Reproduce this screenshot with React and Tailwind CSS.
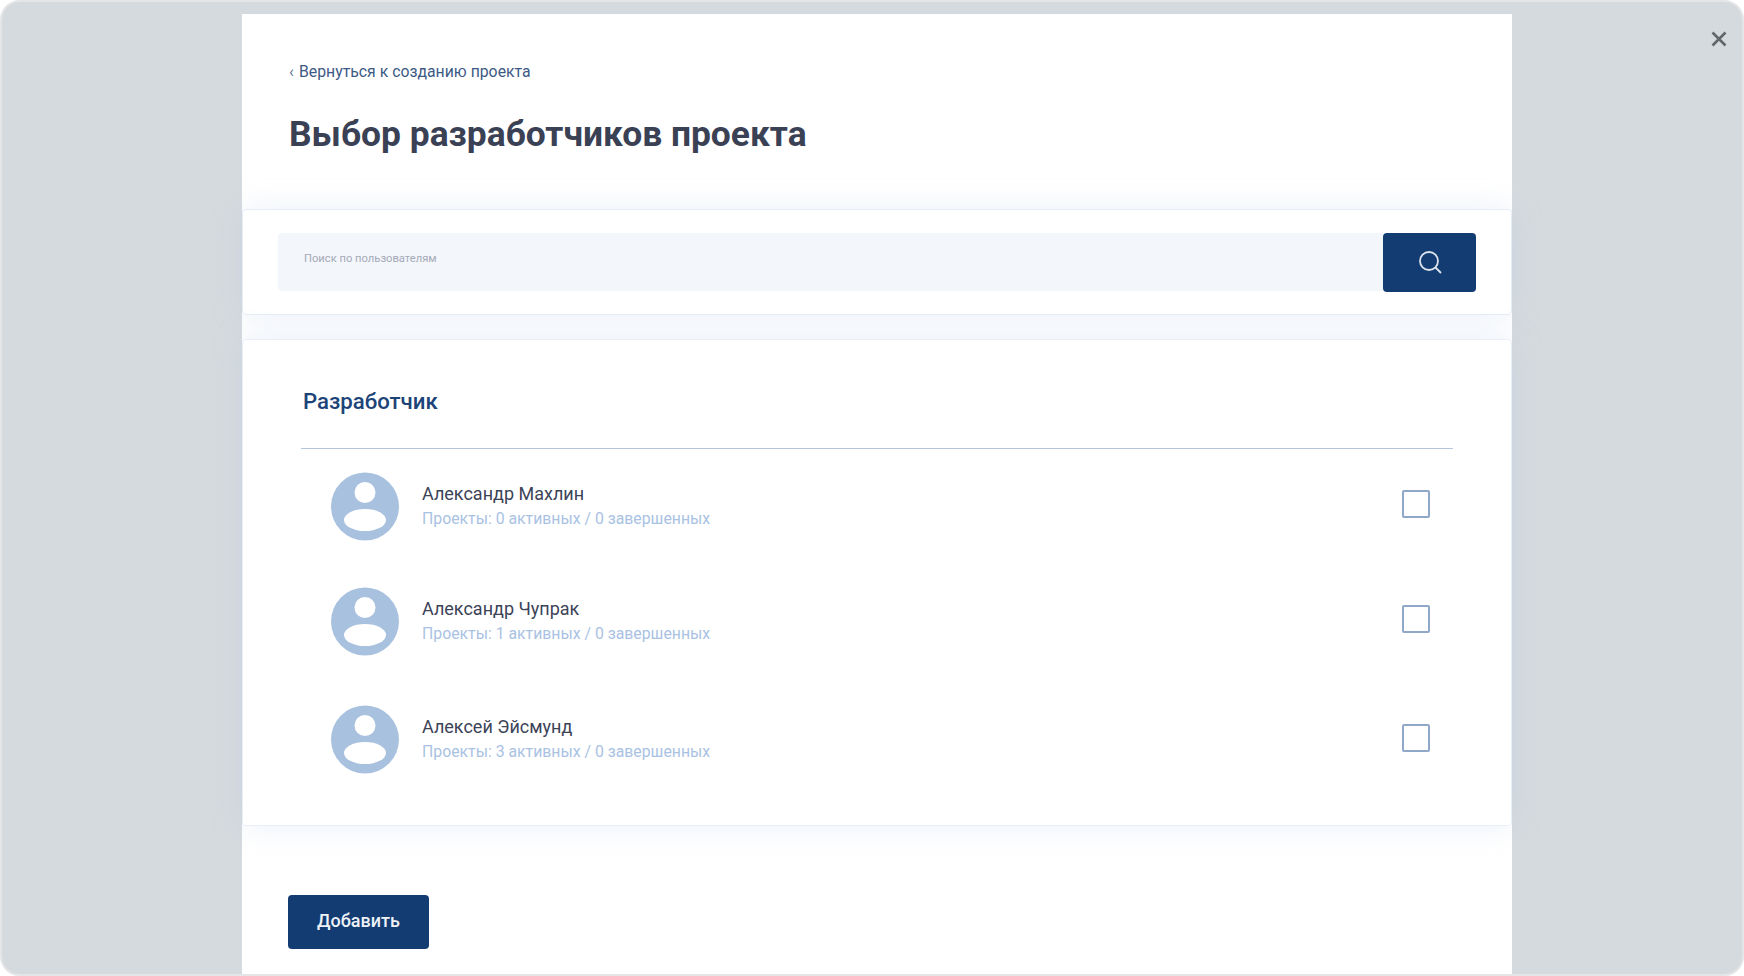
const font = { fontFamily: '"Roboto", "Liberation Sans", sans-serif' };

function Avatar() {
  return (
    <svg width="68" height="69" viewBox="0 0 68 69" className="shrink-0">
      <circle cx="34" cy="34.5" r="34" fill="#a8c1de" />
      <circle cx="34" cy="20.5" r="10.5" fill="#fff" />
      <ellipse cx="34" cy="48" rx="21" ry="11" fill="#fff" />
    </svg>
  );
}

function Row({ name, active, className, checkClass }) {
  return (
    <div className={`flex items-start ${className}`}>
      <Avatar />
      <div className="ml-[23px] flex flex-col">
        <div className="mt-[10px] h-6 text-[18px] leading-6 text-[#3c4357]">{name}</div>
        <div className="mt-[1px] h-6 text-[15.8px] leading-6 text-[#a9c2e3]">
          Проекты: {active} активных / 0 завершенных
        </div>
      </div>
      <div className={`ml-auto mr-[23px] h-[28px] w-[28px] rounded-[2px] border-2 border-[#8fa8c8] bg-white ${checkClass}`} />
    </div>
  );
}

export default function App() {
  return (
    <div className="h-[976px] w-full overflow-hidden bg-white" style={font}>
      <div className="relative h-full w-full overflow-hidden rounded-[20px] border-2 border-[#e3e5e7] bg-[#d5dade]">
        <svg width="16" height="16" viewBox="0 0 16 16" className="absolute left-[1709px] top-[29px]">
          <path d="M1.5 1.5 L14.5 14.5 M14.5 1.5 L1.5 14.5" stroke="#62666a" strokeWidth="2.6" fill="none" />
        </svg>

        <div className="ml-[240px] mt-[12px] h-[964px] w-[1270px] bg-white">
          <div className="pl-[47px] pt-[48px]">
            <div className="flex h-5 items-center text-[15.8px] leading-5 text-[#3d5a85]">
              <span className="mr-[5px] w-[5px] text-[16px] text-[#5f7391]">‹</span>
              <span>Вернуться к созданию проекта</span>
            </div>
            <h1 className="mt-[29px] text-[35.4px] font-bold leading-[46px] text-[#3a4155]">
              Выбор разработчиков проекта
            </h1>
          </div>

          <div className="mt-[52px] flex h-[106px] items-center rounded-[4px] border border-[#e6edf7] bg-white pl-[35px] pr-[35px] shadow-[0_0_30px_rgba(170,195,230,0.25)]">
            <div className="flex h-[58px] flex-1 rounded-l-[4px] bg-[#f3f6fb] pl-[26px] pt-[18px] text-[11.2px] leading-4 text-[#a5a9b8]">
              Поиск по пользователям
            </div>
            <div className="flex h-[59px] w-[93px] items-center justify-center rounded-[4px] bg-[#133c73]">
              <svg width="26" height="26" viewBox="0 0 26 26">
                <circle cx="12" cy="12" r="9" stroke="#dbe3ec" strokeWidth="1.8" fill="none" />
                <path d="M18.5 18.5 L24 24" stroke="#dbe3ec" strokeWidth="1.8" fill="none" />
              </svg>
            </div>
          </div>

          <div className="relative mt-[24px] h-[487px] rounded-[4px] border border-[#e9eff8] bg-white pl-[58px] pr-[58px] shadow-[0_0_30px_rgba(170,195,230,0.25)]">
            <h2 className="pl-[2px] pt-[45px] text-[22.2px] font-medium leading-8 text-[#1c4478]">Разработчик</h2>
            <div className="mt-[31px] h-px bg-[#b4c5dc]" />
            <Row className="mt-[23px] pl-[30px]" name="Александр Махлин" active="0" checkClass="mt-[18px]" />
            <Row className="mt-[46px] pl-[30px]" name="Александр Чупрак" active="1" checkClass="mt-[18px]" />
            <Row className="mt-[49px] pl-[30px]" name="Алексей Эйсмунд" active="3" checkClass="mt-[19px]" />
          </div>

          <div className="pl-[46px] pt-[69px]">
            <button className="h-[54px] w-[141px] rounded-[4px] bg-[#133c73] pb-[3px] text-[18px] font-medium text-[#eef2f7]">
              Добавить
            </button>
          </div>
        </div>
      </div>
    </div>
  );
}
